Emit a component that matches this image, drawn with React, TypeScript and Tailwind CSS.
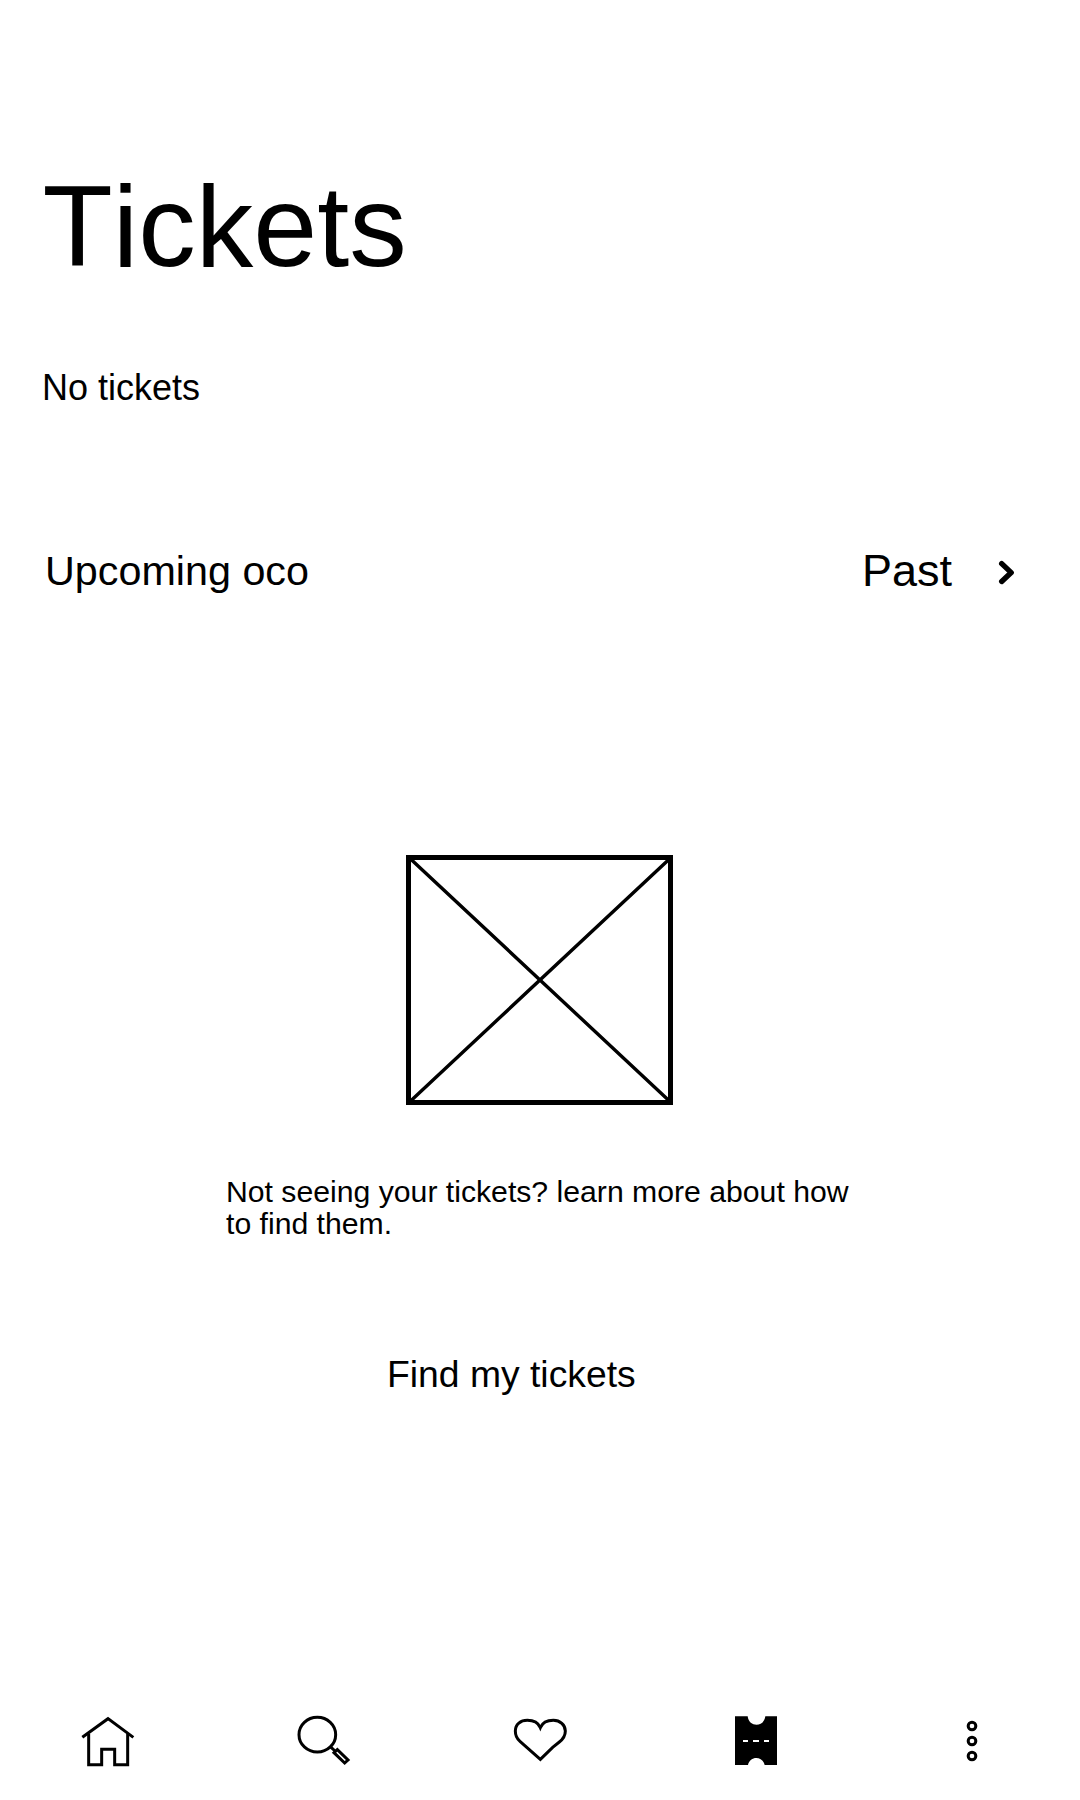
import type { ReactNode } from "react";

function NavItem({ label, viewBox, children }: { label: string; viewBox: string; children: ReactNode }) {
  return (
    <button aria-label={label} className="flex items-center justify-center">
      <svg
        className="h-[70px] w-20"
        viewBox={viewBox}
        fill="none"
        stroke="black"
        strokeWidth={9}
      >
        {children}
      </svg>
    </button>
  );
}

function Chevron() {
  return (
    <svg className="mt-3 ml-auto h-[29px] w-5" viewBox="0 0 20 29" fill="none" stroke="black" strokeWidth={5.4} strokeLinecap="round" strokeLinejoin="round">
      <path d="M3.7 5.6 L13.2 14.6 L3.7 23.4" />
    </svg>
  );
}

function ImagePlaceholder() {
  return (
    <svg className="mx-auto mt-[257px] block h-[254px] w-[270px]" viewBox="0 0 270 254" fill="none" stroke="black">
      <path d="M4 4.5 L266 249.5 M266 4.5 L4 249.5" strokeWidth={3.4} />
      <rect x="3.5" y="4.5" width="262" height="245" strokeWidth={5} shapeRendering="crispEdges" />
    </svg>
  );
}

export default function App() {
  return (
    <main className="flex h-[1800px] w-[1080px] flex-col bg-white font-['Liberation_Sans',Arial,sans-serif] text-black [font-kerning:none]">
      <h1 className="mt-[166px] ml-[42.5px] text-[115px] leading-[120px]">Tickets</h1>
      <p className="mt-[82px] ml-[42px] text-[36px] leading-10">No tickets</p>

      <div className="mt-[138px] flex h-[50px] items-start pr-[62px] pl-[45px] leading-[50px]">
        <h2 className="w-[817px] text-[41.3px]">Upcoming oco</h2>
        <button className="flex w-[156px] items-start text-left">
          <span className="text-[45px] leading-[50px]">Past</span>
          <Chevron />
        </button>
      </div>

      <ImagePlaceholder />

      <p className="mt-[69px] ml-[226px] w-[640px] text-[30.2px] leading-8">
        Not seeing your tickets? learn more about how
        <br />
        to find them.
      </p>
      <button className="mt-[114px] ml-[387px] self-start text-[37.3px] leading-10">Find my tickets</button>

      <nav className="mt-auto mb-[25px] grid grid-cols-5">
        <NavItem label="Home" viewBox="-6 0 240 210">
          <path d="M37 97 L114 41 L190 97" />
          <path d="M56 86 V179 H95 V133 H134 V179 H173 V86" />
        </NavItem>
        <NavItem label="Search" viewBox="-3 0 240 210">
          <ellipse cx="97" cy="89" rx="55" ry="52" />
          <path d="M136 125 L150 138" />
          <path d="M157 134 L189 165 L179 174 L147 143 Z" />
        </NavItem>
        <NavItem label="Favorites" viewBox="0 0 240 210">
          <path d="M121 163 L60 109 C48 99 46 90 46 78 C46 57 62 46 82 46 C102 46 115 54 121 68 C127 54 140 46 160 46 C180 46 196 60 196 78 C196 92 191 101 178 111 L158 127 Z" />
        </NavItem>
        <NavItem label="Tickets" viewBox="3 0 240 210">
          <path d="M60 34 H98 C102 68 147 68 151 34 H186 V180 H149 C142 152 105 152 99 180 H60 Z" fill="black" stroke="none" />
          <path d="M84 108 H99 M114 108 H132 M147 108 H162" stroke="white" strokeWidth={6} />
        </NavItem>
        <NavItem label="More" viewBox="-9 0 240 210">
          <circle cx="111" cy="63" r="11.5" />
          <circle cx="111" cy="108" r="11.5" />
          <circle cx="111" cy="153" r="11.5" />
        </NavItem>
      </nav>
    </main>
  );
}
